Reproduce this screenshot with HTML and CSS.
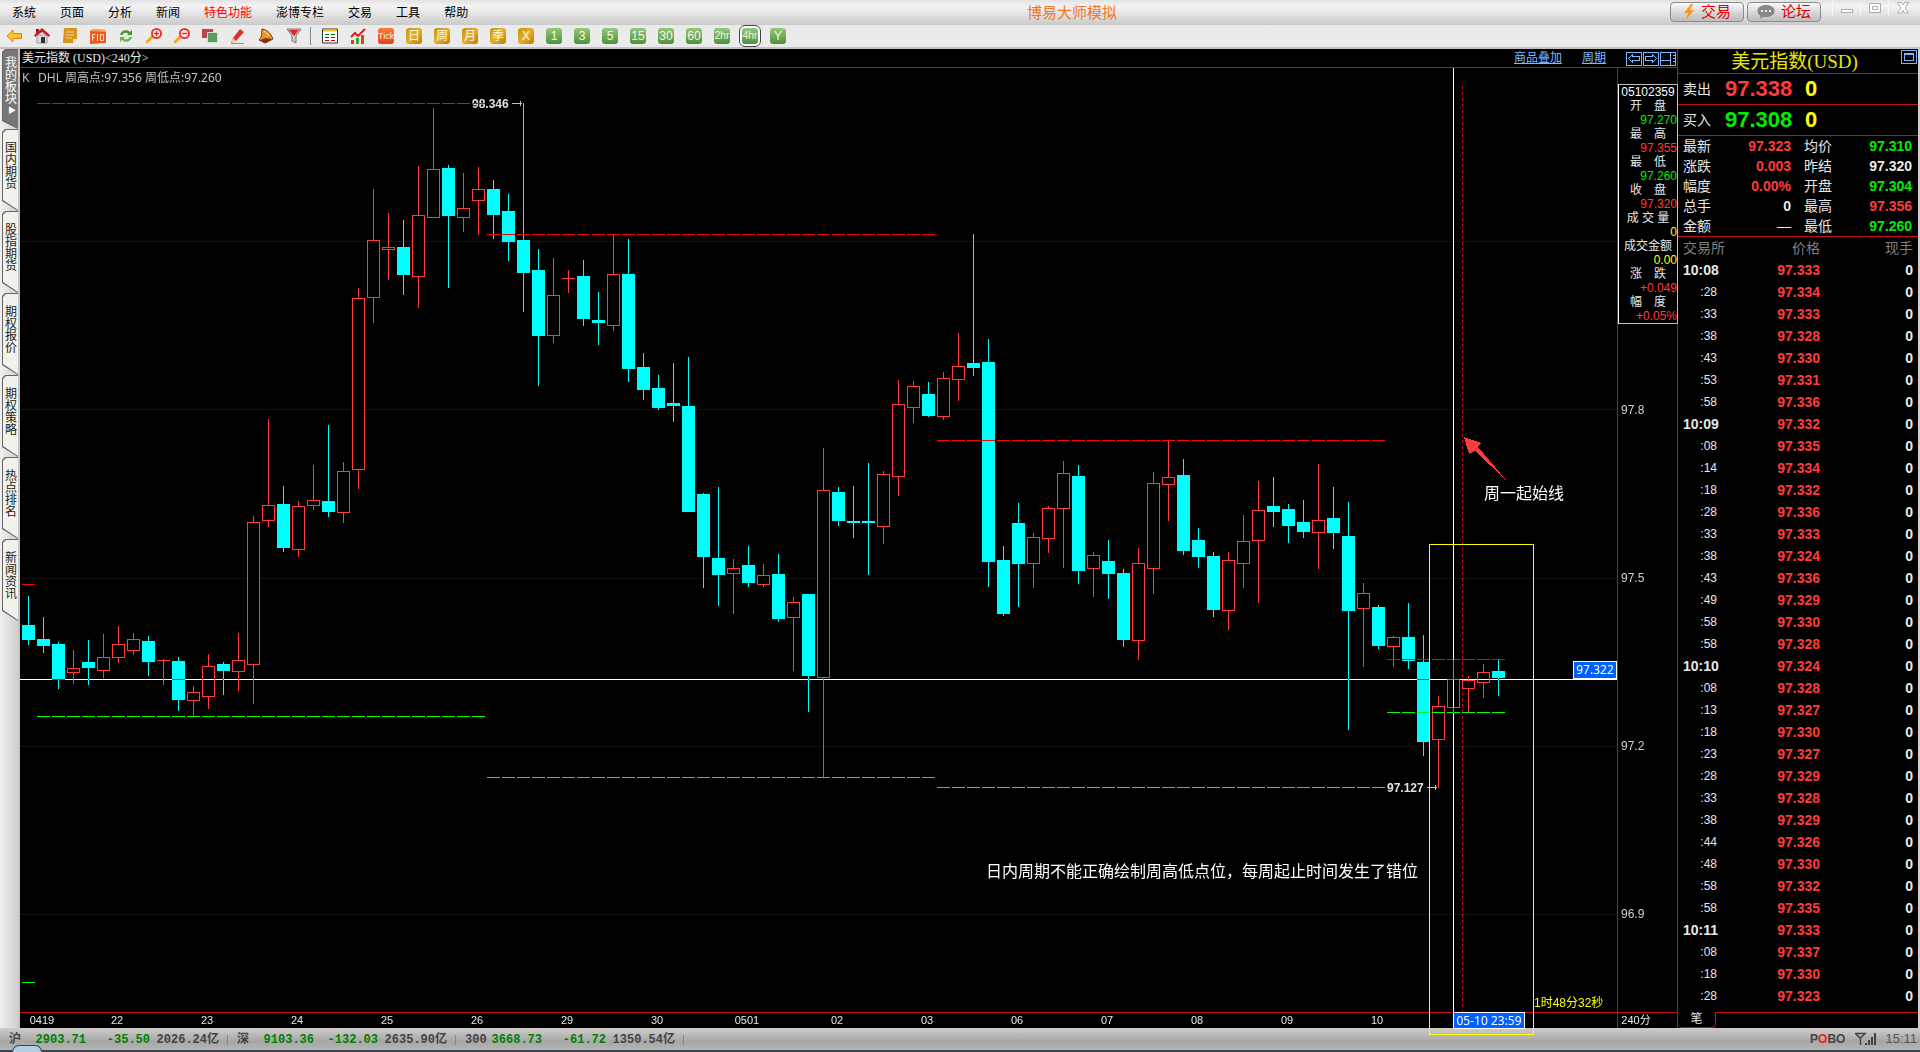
FILE: index.html
```html
<!DOCTYPE html>
<html lang="zh-CN">
<head>
<meta charset="utf-8">
<title>博易大师模拟</title>
<link rel="stylesheet" href="styles.css">
</head>
<body>
<header class="menubar">
  <nav class="menu">
    <a href="#">系统</a><a href="#">页面</a><a href="#">分析</a><a href="#">新闻</a><a href="#" class="hot">特色功能</a><a href="#">澎博专栏</a><a href="#">交易</a><a href="#">工具</a><a href="#">帮助</a>
  </nav>
  <h1 class="app-title">博易大师模拟</h1>
  <div class="quick">
    <button class="quick-btn"><svg width="12" height="16" viewBox="0 0 12 16"><path d="M8 0 1 9h4L3 16l8-10H7l3-6z" fill="#f59a23"/></svg>交易</button>
    <button class="quick-btn"><svg width="18" height="14" viewBox="0 0 18 14"><path d="M9 0c5 0 8.500 2.500 8.500 6S14 12 9 12c-1 0-2 0-3-.300L3 14l.500-3.300C1.500 9.500.500 8 .500 6 .500 2.500 4 0 9 0z" fill="#888"/><path d="M4 5h2v2H4zM8 5h2v2H8zM12 5h2v2h-2z" fill="#eee"/></svg>论坛</button>
  </div>
  <div class="winctl">
    <button aria-label="最小化"><svg width="14" height="14" viewBox="0 0 14 14"><rect x="1.500" y="8.500" width="11" height="3" fill="#fff" stroke="#aaa"/></svg></button>
    <button aria-label="最大化"><svg width="14" height="14" viewBox="0 0 14 14"><path d="M1.500 2.500h11v9h-11zM4.500 5.500h5v3h-5z" fill="#fff" stroke="#aaa"/></svg></button>
    <button aria-label="关闭"><svg width="14" height="14" viewBox="0 0 14 14"><path d="M1.500 1.500h4L7 4l1.500-2.500h4L9 7l3.500 5h-4L7 9.500 5.500 12h-4L5 7z" fill="#fff" stroke="#aaa"/></svg></button>
  </div>
</header>

<div class="toolbar">
  <button aria-label="后退"><svg viewBox="0 0 16 16"><path d="M1 8l6-6v3.500h8.500v5H7V14z" fill="#fbc32c" stroke="#d48a10"/></svg></button>
  <button aria-label="首页"><svg viewBox="0 0 16 16"><path d="M3 7h10v8H3z" fill="#ddd" stroke="#999"/><path d="M7 9h4v6H7z" fill="#333"/><path d="M2 1h3v4H2z" fill="#a11"/><path d="M8 0l8 7-1 2-7-5-7 5-1-2z" fill="#c22431"/></svg></button>
  <button aria-label="笔记"><svg viewBox="0 0 16 16"><path d="M2 0h13v11l-4 4H1z" fill="#d99420"/><path d="M15 11l-4 4v-4z" fill="#ffe3a0"/><path d="M4 4h8M4 7h8M4 10h6" stroke="#f7d080"/></svg></button>
  <button aria-label="F10"><svg viewBox="0 0 16 16"><path d="M0 3l3-2 13 1v13l-16 1z" fill="#ef5a1c"/><path d="M0 3l3-2 13 1v2z" fill="#f9a35a"/><path d="M2.500 12.500v-6h3M2.500 9.500h2M7.500 6v7M10.500 6.500h3v6h-3z" fill="none" stroke="#ffe9c0"/></svg></button>
  <button aria-label="刷新"><svg viewBox="0 0 16 16"><path d="M2 7c1-5 7-6 10-3l2-2v5H9l1.500-1.500C8 4 5 4.500 4.500 7z" fill="#3f9a2c"/><path d="M14 9c-1 5-7 6-10 3l-2 2V9h5l-1.500 1.500C8 12 11 11.500 11.500 9z" fill="#63b83f"/></svg></button>
  <button aria-label="放大"><svg viewBox="0 0 16 16"><path d="M1 14l5-5" stroke="#f6a81c" stroke-width="3" stroke-linecap="round"/><circle cx="10.500" cy="5.500" r="4.500" fill="#fff" stroke="#e8362c" stroke-width="2"/><path d="M8 5.500h5M10.500 3v5" stroke="#e22" stroke-width="1.500"/></svg></button>
  <button aria-label="缩小"><svg viewBox="0 0 16 16"><path d="M1 14l5-5" stroke="#f6a81c" stroke-width="3" stroke-linecap="round"/><circle cx="10.500" cy="5.500" r="4.500" fill="#fff" stroke="#e8362c" stroke-width="2"/><path d="M8 5.500h5" stroke="#e22" stroke-width="1.500"/></svg></button>
  <button aria-label="叠加"><svg viewBox="0 0 16 16"><path d="M0 1h11v9H0z" fill="#c8414a"/><path d="M5.500 4.500h10v10h-10z" fill="#5c9e5e" stroke="#cfe0cf"/></svg></button>
  <button aria-label="画线"><svg viewBox="0 0 16 16"><path d="M10 1l4 3-8 9-5 2 2-5z" fill="#d9352a"/><path d="M3 10l3 3-5 2z" fill="#f5d6a0"/><path d="M1 15.500h13" stroke="#f07060"/></svg></button>
  <button aria-label="预警"><svg viewBox="0 0 16 16"><path d="M4 1c6 1 9 5 11 10l-8 4-6-3c4-4 2-7 3-11z" fill="#e89a28" stroke="#7c2f12"/><path d="M2 12l6-2 6 1-6 4z" fill="#7c2f12"/><path d="M6 3c2 1 4 3 5 5" stroke="#ffe08b" fill="none"/></svg></button>
  <button aria-label="筛选"><svg viewBox="0 0 16 16"><path d="M1 1h14l-5 7v7l-4-2V8z" fill="#ccc" stroke="#777"/><path d="M3 2h10L8 8z" fill="#e0272e"/></svg></button>
  <span class="sep"></span>
  <button aria-label="报价表"><svg viewBox="0 0 16 16"><path d="M.500 1h15v14H.500z" fill="#fff" stroke="#333"/><path d="M1 2.500h14" stroke="#f0c020" stroke-width="2"/><path d="M3 6.500h4M9 6.500h4" stroke="#080"/><path d="M3 9.500h4M9 9.500h4" stroke="#22a"/><path d="M3 12.500h4M9 12.500h4" stroke="#c00"/></svg></button>
  <button aria-label="走势图"><svg viewBox="0 0 16 16"><path d="M1 12h3v4H1zM11 7h3v9h-3z" fill="#e2401c"/><path d="M6 10h3v6H6z" fill="#3a3"/><path d="M1 9l4-4 3 3 7-7" fill="none" stroke="#d22" stroke-width="2"/></svg></button>
  <button class="chip tick">Tick</button>
  <button class="chip gold">日</button>
  <button class="chip gold">周</button>
  <button class="chip gold">月</button>
  <button class="chip gold">季</button>
  <button class="chip gold">X</button>
  <button class="chip green">1</button>
  <button class="chip green">3</button>
  <button class="chip green">5</button>
  <button class="chip green">15</button>
  <button class="chip green">30</button>
  <button class="chip green">60</button>
  <button class="chip green small">2hr</button>
  <button class="chip green small on">4hr</button>
  <button class="chip green">Y</button>
</div>

<main class="work">
  <nav class="side">
    <button class="tab active">我的板块<span class="tri">▶</span></button>
    <button class="tab">国内期货</button>
    <button class="tab">股指期货</button>
    <button class="tab">期权报价</button>
    <button class="tab">期权策略</button>
    <button class="tab">热点排名</button>
    <button class="tab">新闻资讯</button>
  </nav>

  <section class="chart">
    <div class="chart-head">
      <h2>美元指数<span class="half"> (USD)&lt;240</span>分<span class="half">&gt;</span></h2>
      <div class="chart-links">
        <a href="#">商品叠加</a><a href="#">周期</a>
        <span class="frames">
          <button aria-label="左移"><svg width="16" height="14" viewBox="0 0 16 14"><path d="M.500.500h15v13H.500zM2.500 6.500l4-4v2h7v4h-7v2z"/></svg></button>
          <button aria-label="右移"><svg width="16" height="14" viewBox="0 0 16 14"><path d="M.500.500h15v13H.500zM13.500 6.500l-4-4v2h-7v4h7v2z"/></svg></button>
          <button aria-label="布局"><svg width="16" height="14" viewBox="0 0 16 14"><path d="M.500.500h15v13H.500zM10.500 0v14M0 8.500h10M13 3.500h2M13 6.500h2M13 9.500h2"/></svg></button>
        </span>
      </div>
    </div>
    <svg class="plot" viewBox="20 68 1657 960" role="img" aria-label="美元指数240分钟K线图">
      <g class="grid">
        <path d="M21 241.500H1617M21 409.500H1617M21 578.500H1617M21 746.500H1617M21 914.500H1617"/>
      </g>
      <g class="frame"><path d="M1617.500 68V1028M20 1012.500H1677"/></g>
      <path class="week-start" d="M1462.500 86V1012"/>
      <g id="candles"></g>
      <g id="levels"></g>
      <g class="mark">
        <text x="472" y="108">98.346</text><path d="M512 103.500h10M520.500 101v5"/>
        <text x="1387" y="792">97.127</text><path d="M1427 787.500h10M1435.500 785v5"/>
      </g>
      <path d="M472 103.500h13" stroke="#f00"/>
      <g class="cross"><path d="M20 679.500H1617M1453.500 68V1012"/></g>
      <path class="box" d="M1429.500 544.500H1533.500V1034.500H1429.500z"/>
      <path d="M1464 437l17 6-3 4 28 33-31-29-6 3z" fill="#ff3b3b"/>
      <text class="note" x="1484" y="499">周一起始线</text>
      <text class="note" x="986" y="877">日内周期不能正确绘制周高低点位，每周起止时间发生了错位</text>
      <text class="indicator" x="22" y="82">K</text>
      <text class="indicator" x="38" y="82">DHL 周高点:97.356 周低点:97.260</text>
      <g class="price-axis">
        <text x="1621" y="414">97.8</text><text x="1621" y="582">97.5</text><text x="1621" y="750">97.2</text><text x="1621" y="918">96.9</text>
      </g>
      <g class="date-axis">
        <text x="42" y="1024">0419</text><text x="117" y="1024">22</text><text x="207" y="1024">23</text><text x="297" y="1024">24</text><text x="387" y="1024">25</text><text x="477" y="1024">26</text><text x="567" y="1024">29</text><text x="657" y="1024">30</text><text x="747" y="1024">0501</text><text x="837" y="1024">02</text><text x="927" y="1024">03</text><text x="1017" y="1024">06</text><text x="1107" y="1024">07</text><text x="1197" y="1024">08</text><text x="1287" y="1024">09</text><text x="1377" y="1024">10</text><text x="1636" y="1024">240分</text>
      </g>
      <text class="countdown" x="1534" y="1007">1时48分32秒</text>
      <g class="tag">
        <rect x="1573.500" y="661.500" width="43" height="17"/><text x="1595" y="674">97.322</text>
        <rect x="1453.500" y="1012.500" width="71" height="16"/><text x="1489" y="1025">05-10 23:59</text>
      </g>
    </svg>
    <dl class="readout">
      <dt class="stamp">05102359</dt>
      <dt>开　盘</dt><dd class="down">97.270</dd>
      <dt>最　高</dt><dd class="up">97.355</dd>
      <dt>最　低</dt><dd class="down">97.260</dd>
      <dt>收　盘</dt><dd class="up">97.320</dd>
      <dt>成 交 量</dt><dd class="flat">0</dd>
      <dt>成交金额</dt><dd class="flat">0.00</dd>
      <dt>涨　跌</dt><dd class="up">+0.049</dd>
      <dt>幅　度</dt><dd class="up">+0.05%</dd>
    </dl>
  </section>

  <aside class="quote">
    <div class="quote-title">
      <h2>美元指数<span class="half">(USD)</span></h2>
      <button class="expand" aria-label="展开"><svg width="16" height="14" viewBox="0 0 16 14"><path d="M.500.500h15v13H.500zM3.500 3.500h9v7h-9zM3.500 4.500h9"/></svg></button>
    </div>
    <div class="bid"><span>卖出</span><b class="up">97.338</b><b class="flat">0</b></div>
    <div class="bid"><span>买入</span><b class="down">97.308</b><b class="flat">0</b></div>
    <table class="stats">
      <tr><th>最新</th><td class="up">97.323</td><th>均价</th><td class="down">97.310</td></tr>
      <tr><th>涨跌</th><td class="up">0.003</td><th>昨结</th><td>97.320</td></tr>
      <tr><th>幅度</th><td class="up">0.00%</td><th>开盘</th><td class="down">97.304</td></tr>
      <tr><th>总手</th><td>0</td><th>最高</th><td class="up">97.356</td></tr>
      <tr><th>金额</th><td class="dash">—</td><th>最低</th><td class="down">97.260</td></tr>
    </table>
    <table class="ticks">
      <thead><tr><th>交易所</th><th>价格</th><th>现手</th></tr></thead>
      <tbody id="ticks"></tbody>
    </table>
    <div class="quote-tabs"><button>笔</button><span></span></div>
  </aside>
</main>

<footer class="status">
  <div class="index"><span>沪</span><b>2903.71</b><b>-35.50</b><span class="amt">2026.24亿</span></div>
  <div class="index"><span>深</span><b>9103.36</b><b>-132.03</b><span class="amt">2635.90亿</span></div>
  <div class="index"><span>300</span><b>3668.73</b><b>-61.72</b><span class="amt">1350.54亿</span></div>
  <div class="status-right">
    <strong>P<em>O</em>BO</strong>
    <svg width="22" height="14" viewBox="0 0 22 14"><path d="M1 1.500h10L6.500 6v7M1.500 1.500L6 6" fill="none" stroke="#444" stroke-width="1.500"/><path d="M11 11h2v2h-2zM14 8h2v5h-2zM17 5h2v8h-2zM20 1h2v12h-2z" fill="#444"/></svg>
    <time>15:11</time>
  </div>
  <span class="orb"></span>
</footer>
<script src="script.js"></script>
</body>
</html>
```
FILE: styles.css
```css
* { box-sizing: border-box; }
body {
  margin: 0;
  min-height: 100vh;
  display: flex;
  flex-direction: column;
  background: #ebebeb;
  font-family: "Liberation Sans", "Noto Sans CJK SC", sans-serif;
  font-size: 12px;
  color: #000;
}
h1, h2, dl, dd { margin: 0; font-weight: normal; }
button { font: inherit; color: inherit; background: none; border: 0; padding: 0; }
a { color: inherit; text-decoration: none; }
svg { display: block; }
table { border-collapse: collapse; width: 100%; }
th, td { padding: 0; font-weight: normal; }
.up { color: #ff3b3b; }
.down { color: #00ec00; }
.flat { color: #ff0; }
.half { font-family: "Liberation Serif", serif; }

/* menu bar */
.menubar {
  display: flex;
  height: 25px;
  background: linear-gradient(#e2e2e2, #f4f4f4 25%, #e6e6e6 50%, #cacaca);
}
.menu { display: flex; gap: 24px; padding-left: 12px; line-height: 26px; }
.hot { color: #f00; }
.app-title { flex: 1; text-align: center; padding-left: 6px; font-size: 15px; line-height: 25px; color: #f37421; }
.quick { display: flex; gap: 3px; padding-top: 2px; }
.quick-btn {
  display: flex;
  align-items: center;
  justify-content: center;
  gap: 6px;
  width: 74px;
  height: 20px;
  border: 1px solid #8c8c8c;
  border-radius: 4px;
  background: linear-gradient(#fafafa, #d2d2d2 60%, #bebebe);
  color: #e00000;
  font-size: 15px;
  line-height: 18px;
}
.winctl { display: flex; width: 99px; padding-left: 11px; padding-right: 4px; }
.winctl button { flex: 1; height: 16px; display: flex; align-items: center; justify-content: center; border-left: 1px solid #f6f6f6; }

/* toolbar */
.toolbar {
  display: flex;
  align-items: center;
  gap: 12px;
  height: 24px;
  padding: 0 6px;
  border-bottom: 2px solid #c6c2c2;
}
.toolbar button { flex: none; width: 16px; height: 16px; }
.sep { width: 1px; height: 18px; margin: 0 -1px 0 -4px; background: #888; }
.toolbar .chip {
  border-radius: 3px;
  color: #fff8dc;
  font-size: 12px;
  line-height: 16px;
  text-align: center;
  white-space: nowrap;
}
.toolbar .tick { font-size: 9px; background: linear-gradient(#fb7a3a, #e8401a); }
.gold { background: linear-gradient(135deg, #c8960c, #e0b030 50%, #c07a00); }
.green { background: linear-gradient(#94c97c, #4c923c); }
.toolbar .small { font-size: 10px; }
.toolbar .on { outline: 1px solid #444; box-shadow: 0 0 0 3px #fff; outline-offset: 2px; }

/* work area */
.work { flex: 1; display: grid; grid-template-columns: 20px minmax(0, 1fr) 241px; background: #000; border-right: 2px solid #d4cccc; }
.side { display: flex; flex-direction: column; background: linear-gradient(90deg, #f0f0f0, #cfcfcf); padding-left: 2px; border-right: 2px solid #cac4c4; }
.tab {
  position: relative;
  z-index: 0;
  display: flex;
  flex-direction: column;
  justify-content: flex-start;
  height: 82px;
  padding: 13px 1px 0 3px;
  background: #666;
  color: #222;
  line-height: 12px;
  text-align: left;
  word-break: break-all;
  clip-path: polygon(0 3px, 3px 0, 100% 0, 100% 100%, 0 72px);
}
.tab::before {
  content: "";
  position: absolute;
  inset: 1px 0 1px 1px;
  background: #f2f2ec;
  clip-path: polygon(0 3px, 3px 0, 100% 0, 100% 100%, 0 70px);
  z-index: -1;
}
.tab.active { color: #fff; padding-top: 8px; height: 80px; }
.tab.active::before { background: #777; }
.tri { font-size: 8px; padding-left: 3px; }

/* chart */
.chart { position: relative; }
.chart-head { display: flex; justify-content: space-between; height: 19px; border-bottom: 1px solid #c01010; line-height: 18px; color: #e8e8e8; }
.chart-head h2 { font-size: 12px; padding-left: 2px; }
.chart-links { display: flex; gap: 20px; padding-right: 1px; color: #7db8ff; }
.chart-links a { text-decoration: underline; }
.frames { display: flex; gap: 1px; padding-top: 1px; }
.frames svg, .expand svg { fill: none; stroke: #7db8ff; shape-rendering: crispEdges; }
.plot { width: 100%; height: auto; overflow: visible; position: relative; z-index: 1; isolation: isolate; }
.plot path, .plot rect { shape-rendering: crispEdges; }
.grid path { stroke: #800000; stroke-dasharray: 1 1; }
.frame path { stroke: #c01010; }
.week-start { stroke: #c01010; stroke-dasharray: 3 3; }
.candle-up { fill: #000; stroke: #ff3b3b; }
.wick-up { stroke: #ff3b3b; }
.candle-down { fill: #0ff; }
.wick-down { stroke: #0ff; }
.level-high { stroke: #f00; stroke-dasharray: 13 2; }
.level-low { stroke: #0f0; stroke-dasharray: 13 2; }
.mark text { font-size: 12px; font-weight: bold; fill: #e0e0e0; }
.mark path { stroke: #c0c0c0; }
.cross path { stroke: #fff; }
.cross { mix-blend-mode: difference; }
.box { fill: none; stroke: #ff0; }
.note { font-size: 16px; fill: #fff; }
.indicator { font-family: "Noto Sans", "Noto Sans CJK SC", sans-serif; font-size: 12px; fill: #c0c0c0; }
.price-axis text { font-size: 12px; fill: #d0d0d0; }
.date-axis text { font-size: 11px; fill: #e8e8e8; text-anchor: middle; }
.countdown { font-size: 12px; fill: #ff0; }
.tag rect { fill: #0060ff; stroke: #fff; }
.tag text { font-family: "Noto Sans", sans-serif; font-size: 12px; fill: #fff; text-anchor: middle; }
.readout {
  position: absolute;
  z-index: 2;
  top: 35px;
  right: -1px;
  width: 60px;
  border: 1px solid #c0c0c0;
  border-left-color: #fff;
  background: #000;
  line-height: 14px;
}
.readout dt { color: #e8e8e8; text-align: center; white-space: nowrap; }
.readout dd { text-align: right; }
.readout .stamp { color: #fff; }

/* quote panel */
.quote { display: flex; flex-direction: column; border-left: 1px solid #c01010; color: #e8e8e8; }
.quote-title { display: flex; height: 25px; padding-left: 10px; border-bottom: 1px solid #c01010; color: #e8e800; }
.quote-title h2 { flex: 1; text-align: center; font-size: 19px; line-height: 25px; }
.expand { align-self: flex-start; padding: 1px 1px 0 0; }
.bid { display: grid; grid-template-columns: 42px 80px 1fr; height: 31px; padding-left: 5px; line-height: 30px; font-size: 14px; border-bottom: 1px solid #c01010; }
.bid b { font-size: 22px; }
.stats { font-size: 14px; border-bottom: 1px solid #c01010; table-layout: fixed; }
.stats tr { height: 20px; line-height: 20px; }
.stats th { text-align: left; width: 45px; padding-left: 5px; }
.stats th + td + th { width: 56px; padding-left: 13px; }
.stats td { text-align: right; font-weight: bold; }
.stats td:nth-child(2) { width: 68px; }
.stats td:last-child { padding-right: 6px; }
.stats .dash { font-weight: normal; }
.ticks { font-size: 14px; table-layout: fixed; line-height: 22px; flex: none; }
.ticks th { color: #808080; text-align: right; }
.ticks th:first-child { text-align: left; padding-left: 5px; width: 62px; }
.ticks th:nth-child(2) { width: 80px; }
.ticks th:last-child, .ticks td:last-child { padding-right: 5px; }
.ticks td { text-align: right; font-weight: bold; }
.ticks td:first-child { padding-right: 23px; font-size: 12px; font-weight: normal; }
.ticks td.minute { padding: 0 0 0 5px; text-align: left; font-size: 14px; font-weight: bold; }
.quote-tabs { display: flex; height: 16px; margin-top: auto; }
.quote-tabs button { width: 38px; border: 1px solid #c01010; border-width: 0 1px 1px 0; border-radius: 0 0 4px 4px; line-height: 15px; font-size: 12px; }
.quote-tabs span { flex: 1; border-top: 1px solid #c01010; }

/* status bar */
.status {
  position: relative;
  display: flex;
  flex: none;
  height: 24px;
  border-bottom: 2px solid #3c4650;
  background: linear-gradient(#cfcbcb, #b4b4b4 40%, #a6a6a6 60%, #b4b4b4);
  font-family: "Liberation Mono", "Noto Sans CJK SC", monospace;
  font-weight: bold;
  line-height: 24px;
  color: #444;
}
.index { display: grid; grid-template-columns: 20px 57px 64px 69px; width: 228px; padding-left: 9px; position: relative; }
.index::after { content: ""; position: absolute; right: 0; top: 7px; width: 1px; height: 10px; background: #888; }
.index b { color: #008000; text-align: right; }
.index span { white-space: nowrap; }
.index .amt { text-align: right; }
.status-right { display: flex; gap: 9px; align-items: center; margin-left: auto; padding-right: 3px; font-family: "Liberation Sans", sans-serif; }
.status-right em { font-style: normal; color: #f02020; }
.status-right time { font-size: 13px; font-weight: normal; color: #555; }
.orb {
  position: absolute;
  left: 12px;
  top: 17px;
  width: 30px;
  height: 7px;
  border: 1px solid #234a6a;
  border-bottom: 0;
  border-radius: 15px 15px 0 0;
  background: #b4cfe4;
}
```
FILE: script.js
```js
// Each candle: direction (u/d), wick top, body top, body bottom, wick bottom.
const candles = `d596,625,640,645 d617,639,646,653 d642,644,680,689 u650,668,673,684 d640,662,668,685
u634,657,671,678 u626,644,658,663 u633,639,651,655 d636,641,662,676 u659,660,661,685
d657,661,700,711 u686,692,701,716 u654,666,697,709 d662,664,671,695 u633,660,672,691
u516,522,665,704 u419,505,521,527 d486,504,548,552 u501,506,550,557 u465,500,506,510
d425,501,512,517 u462,471,513,523 u288,298,470,489 u189,240,298,323 u213,247,250,280
d220,247,275,295 u166,215,277,308 u108,169,218,218 d165,168,216,288 u173,208,218,232
u167,189,201,235 d180,189,215,239 d194,211,242,261 d103,240,273,312 d249,270,336,386
u258,295,336,343 u270,278,279,293 d260,276,319,326 d292,320,323,345 u235,274,326,331
d239,274,369,382 d353,367,390,400 d375,388,408,410 d363,403,406,422 d357,406,512,512
d493,494,557,588 d487,558,575,606 u559,568,574,614 d546,565,583,587 u564,575,585,587
d554,574,619,622 u597,602,618,671 d594,594,676,712 u448,490,678,777 d487,492,521,526
d486,521,523,538 d463,521,523,575 u471,474,527,544 u380,404,477,496 u381,386,408,423
d382,394,416,417 u372,378,417,420 u333,366,380,401 d234,363,368,376 d339,362,562,587
d546,560,614,616 d503,523,564,607 u533,537,564,588 u506,508,539,553 u461,473,509,568
d465,476,571,584 u552,555,569,597 d540,561,574,599 d569,573,640,647 u548,563,641,660
u472,483,569,594 u441,477,485,521 d459,475,551,555 d528,540,557,568 d552,556,610,617
u552,560,611,630 u515,541,564,588 u481,510,541,603 d477,506,512,527 d504,509,526,543
d500,522,532,538 u464,520,533,569 d487,518,533,549 d502,536,611,730 u583,593,609,667
d605,607,646,649 u636,637,647,667 d603,637,661,669 d635,662,742,756 u696,706,740,788
u660,679,708,712 u676,680,689,712 u664,672,683,698 d660,671,678,696`;

const STEP = 15, LEFT = 22, BODY = 13;
const parts = candles.split(/\s+/).map((c, i) => {
  const up = c[0] === 'u';
  const [hi, top, bottom, lo] = c.slice(1).split(',').map(Number);
  const x = LEFT + i * STEP, mid = x + 6.5;
  if (up) {
    const body = bottom - top > 1
      ? `<rect class="candle-up" x="${x + .5}" y="${top + .5}" width="${BODY - 1}" height="${bottom - top - 1}"/>`
      : `<path class="wick-up" d="M${x} ${top + .5}h${BODY}"/>`;
    return `<path class="wick-up" d="M${mid} ${hi}V${lo}"/>${body}`;
  }
  return `<path class="wick-down" d="M${mid} ${hi}V${lo}"/>` +
    `<rect class="candle-down" x="${x}" y="${top}" width="${BODY}" height="${bottom - top}"/>`;
});
document.getElementById('candles').innerHTML = parts.join('');

// Weekly high and low: first candle, last candle, high y, low y.
const weeks = [[0, 0, 584, 982], [1, 30, 103, 716], [31, 60, 234, 777], [61, 90, 440, 787], [91, 98, 659, 712]];
document.getElementById('levels').innerHTML = weeks.map(([a, b, hi, lo]) => {
  const x1 = LEFT + a * STEP, x2 = LEFT + b * STEP + BODY;
  return `<path class="level-high" d="M${x1} ${hi + .5}H${x2}"/><path class="level-low" d="M${x1} ${lo + .5}H${x2}"/>`;
}).join('');

const ticks = `10:08 333,:28 334,:33 333,:38 328,:43 330,:53 331,:58 336,10:09 332,:08 335,:14 334,:18 332,:28 336,:33 333,:38 324,:43 336,:49 329,:58 330,:58 328,10:10 324,:08 328,:13 327,:18 330,:23 327,:28 329,:33 328,:38 329,:44 326,:48 330,:58 332,:58 335,10:11 333,:08 337,:18 330,:28 323`;
document.getElementById('ticks').innerHTML = ticks.split(',').map(t => {
  const [time, price] = t.split(' ');
  return `<tr><td${time[0] === ':' ? '' : ' class="minute"'}>${time}</td><td class="up">97.${price}</td><td>0</td></tr>`;
}).join('');
```
